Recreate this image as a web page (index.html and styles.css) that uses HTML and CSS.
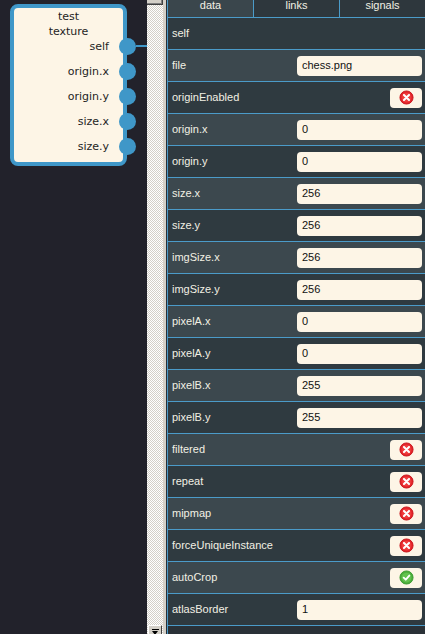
FILE: index.html
```html
<!DOCTYPE html>
<html>
<head>
<meta charset="utf-8">
<link rel="stylesheet" href="styles.css">
</head>
<body>
<div class="canvas">
  <div class="node">
    <div class="title">test</div>
    <div class="title">texture</div>
    <div class="ports">
      <div class="port">self<span class="pin"></span><span class="wire"></span></div>
      <div class="port">origin.x<span class="pin"></span></div>
      <div class="port">origin.y<span class="pin"></span></div>
      <div class="port">size.x<span class="pin"></span></div>
      <div class="port">size.y<span class="pin"></span></div>
    </div>
  </div>
</div>
<div class="scrollbar">
  <div class="thumb"></div>
  <div class="track"></div>
  <div class="arrow"><span class="arrow-bar"></span><span class="arrow-tri"></span></div>
</div>
<div class="gutter"></div>
<div class="panel">
  <div class="tabs">
    <div class="tab active">data</div>
    <div class="tab">links</div>
    <div class="tab">signals</div>
  </div>
  <div class="row dark"><span class="label">self</span></div>
  <div class="row light"><span class="label">file</span><span class="field">chess.png</span></div>
  <div class="row dark"><span class="label">originEnabled</span><span class="toggle"><svg class="icon" viewBox="0 0 16 16"><circle cx="8" cy="8" r="7" fill="#e4252b" stroke="#c8141a" stroke-width="1"/><circle cx="8" cy="8" r="5.2" fill="#ee3b3b"/><path d="M5.3 5.3L10.7 10.7M10.7 5.3L5.3 10.7" stroke="#fff" stroke-width="2.2" stroke-linecap="round"/></svg></span></div>
  <div class="row light"><span class="label">origin.x</span><span class="field">0</span></div>
  <div class="row dark"><span class="label">origin.y</span><span class="field">0</span></div>
  <div class="row light"><span class="label">size.x</span><span class="field">256</span></div>
  <div class="row dark"><span class="label">size.y</span><span class="field">256</span></div>
  <div class="row light"><span class="label">imgSize.x</span><span class="field">256</span></div>
  <div class="row dark"><span class="label">imgSize.y</span><span class="field">256</span></div>
  <div class="row light"><span class="label">pixelA.x</span><span class="field">0</span></div>
  <div class="row dark"><span class="label">pixelA.y</span><span class="field">0</span></div>
  <div class="row light"><span class="label">pixelB.x</span><span class="field">255</span></div>
  <div class="row dark"><span class="label">pixelB.y</span><span class="field">255</span></div>
  <div class="row light"><span class="label">filtered</span><span class="toggle"><svg class="icon" viewBox="0 0 16 16"><circle cx="8" cy="8" r="7" fill="#e4252b" stroke="#c8141a" stroke-width="1"/><circle cx="8" cy="8" r="5.2" fill="#ee3b3b"/><path d="M5.3 5.3L10.7 10.7M10.7 5.3L5.3 10.7" stroke="#fff" stroke-width="2.2" stroke-linecap="round"/></svg></span></div>
  <div class="row dark"><span class="label">repeat</span><span class="toggle"><svg class="icon" viewBox="0 0 16 16"><circle cx="8" cy="8" r="7" fill="#e4252b" stroke="#c8141a" stroke-width="1"/><circle cx="8" cy="8" r="5.2" fill="#ee3b3b"/><path d="M5.3 5.3L10.7 10.7M10.7 5.3L5.3 10.7" stroke="#fff" stroke-width="2.2" stroke-linecap="round"/></svg></span></div>
  <div class="row light"><span class="label">mipmap</span><span class="toggle"><svg class="icon" viewBox="0 0 16 16"><circle cx="8" cy="8" r="7" fill="#e4252b" stroke="#c8141a" stroke-width="1"/><circle cx="8" cy="8" r="5.2" fill="#ee3b3b"/><path d="M5.3 5.3L10.7 10.7M10.7 5.3L5.3 10.7" stroke="#fff" stroke-width="2.2" stroke-linecap="round"/></svg></span></div>
  <div class="row dark"><span class="label">forceUniqueInstance</span><span class="toggle"><svg class="icon" viewBox="0 0 16 16"><circle cx="8" cy="8" r="7" fill="#e4252b" stroke="#c8141a" stroke-width="1"/><circle cx="8" cy="8" r="5.2" fill="#ee3b3b"/><path d="M5.3 5.3L10.7 10.7M10.7 5.3L5.3 10.7" stroke="#fff" stroke-width="2.2" stroke-linecap="round"/></svg></span></div>
  <div class="row light"><span class="label">autoCrop</span><span class="toggle"><svg class="icon" viewBox="0 0 16 16"><circle cx="8" cy="8" r="7" fill="#4cae3c" stroke="#3a9a2e" stroke-width="1"/><circle cx="8" cy="8" r="5.2" fill="#62c24e"/><path d="M5 8.2L7.2 10.3L11 5.9" fill="none" stroke="#fff" stroke-width="2" stroke-linecap="round" stroke-linejoin="round"/></svg></span></div>
  <div class="row dark"><span class="label">atlasBorder</span><span class="field">1</span></div>
</div>
</body>
</html>
```
FILE: styles.css
```css
html, body {
  margin: 0;
  padding: 0;
}
body {
  width: 425px;
  height: 634px;
  overflow: hidden;
  background: #22222b;
  display: flex;
  font-family: "Liberation Sans", Arial, sans-serif;
}
.canvas {
  width: 147px;
  flex: none;
  position: relative;
}
.node {
  position: absolute;
  left: 10px;
  top: 4px;
  width: 109px;
  height: 153px;
  border: 4px solid #3f97c8;
  border-radius: 8px;
  background: #fdf5e6;
  padding-top: 1px;
  font-family: "DejaVu Sans", sans-serif;
  font-size: 11px;
  color: #1e1e1e;
  box-sizing: content-box;
}
.title {
  text-align: center;
  line-height: 15px;
  height: 15px;
}
.ports {
  display: flex;
  flex-direction: column;
  gap: 10px;
}
.port {
  position: relative;
  height: 15px;
  line-height: 15px;
  text-align: right;
  padding-right: 14px;
}
.pin {
  position: absolute;
  right: -13px;
  top: -1px;
  width: 17px;
  height: 17px;
  border-radius: 50%;
  background: #3f97c8;
}
.wire {
  position: absolute;
  left: 122px;
  top: 6px;
  width: 20px;
  height: 2px;
  background: #3f97c8;
}
.scrollbar {
  width: 16px;
  flex: none;
  display: flex;
  flex-direction: column;
  background: repeating-conic-gradient(#d4d0c8 0 25%, #ffffff 0 50%) 0 0 / 2px 2px;
  position: relative;
  z-index: 1;
}
.thumb {
  height: 5px;
  background: #d4d0c8;
  border-right: 1px solid #404040;
  border-bottom: 1px solid #404040;
  box-sizing: border-box;
  box-shadow: inset -1px -1px 0 #808080;
}
.track {
  flex: 1;
}
.arrow {
  height: 9px;
  margin: 0 1px 0 1px;
  background: #d4d0c8;
  border-top: 1px solid #ffffff;
  border-left: 1px solid #ffffff;
  border-right: 1px solid #404040;
  box-sizing: border-box;
  display: flex;
  flex-direction: column;
  align-items: center;
  padding-top: 3px;
  gap: 1px;
}
.arrow-bar {
  width: 7px;
  height: 1px;
  background: #000;
  flex: none;
}
.arrow-tri {
  width: 0;
  height: 0;
  border-left: 3.5px solid transparent;
  border-right: 3.5px solid transparent;
  border-top: 4px solid #000;
  flex: none;
}
.gutter {
  width: 3px;
  flex: none;
  background: #d4d0c8;
  border-right: 1px solid #2a2f35;
}
.panel {
  flex: 1;
  border-left: 1px solid #4b9bc9;
  background: #2a3137;
  display: flex;
  flex-direction: column;
  color: #f2f0e4;
  font-size: 11px;
}
.tabs {
  display: flex;
  height: 17px;
  border-bottom: 1px solid #4b9bc9;
  flex: none;
}
.tab {
  width: 85px;
  text-align: center;
  line-height: 11px;
  background: #2e373d;
  border-left: 1px solid #4b9bc9;
}
.tab.active {
  background: #3a464c;
  border-left: none;
}
.row {
  height: 31px;
  border-bottom: 1px solid #4b9bc9;
  display: flex;
  align-items: center;
  justify-content: space-between;
  padding: 0 3px 0 4px;
  flex: none;
}
.label {
  margin-top: -1px;
}
.row.dark {
  background: #2f3a40;
}
.row.light {
  background: #3c484e;
}
.field {
  width: 120px;
  height: 20px;
  padding-left: 5px;
  background: #fdf5e6;
  border-radius: 4px;
  color: #111;
  line-height: 19px;
}
.toggle {
  width: 32px;
  height: 20px;
  background: #fdf5e6;
  border-radius: 4px;
  display: flex;
  align-items: center;
  justify-content: center;
}
.icon {
  width: 15px;
  height: 15px;
}
```
